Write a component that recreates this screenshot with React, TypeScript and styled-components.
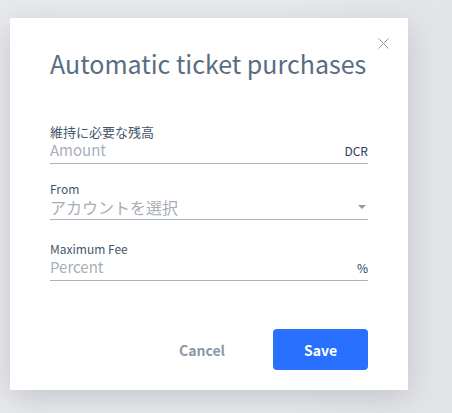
import styled, { createGlobalStyle } from "styled-components";

const GlobalStyle = createGlobalStyle`
  html, body {
    margin: 0;
    padding: 0;
  }
  body {
    width: 452px;
    height: 413px;
    overflow: hidden;
    font-family: "Noto Sans CJK JP", "Noto Sans", sans-serif;
    background: linear-gradient(90deg, #e9eaec 0%, #eaebed 60%, #e3e4e7 100%);
  }
`;

const Backdrop = styled.div`
  width: 452px;
  height: 413px;
  padding: 18px 0 0 10px;
  box-sizing: border-box;
`;

const Modal = styled.div`
  position: relative;
  width: 398px;
  background: #fff;
  padding: 30px 40px 20px;
  box-sizing: border-box;
  box-shadow: 0 8px 30px rgba(120, 128, 145, 0.35);
`;

const Close = styled.button`
  position: absolute;
  top: 20px;
  right: 19px;
  width: 11px;
  height: 11px;
  padding: 0;
  border: 0;
  background: none;
  cursor: pointer;
  display: flex;
`;

const Title = styled.h1`
  margin: 0;
  font-size: 25px;
  line-height: 30px;
  font-weight: 400;
  color: #596d82;
  white-space: nowrap;
`;

const Field = styled.div<{ $gap: number }>`
  margin-top: ${(p) => p.$gap}px;
`;

const Label = styled.div<{ $size: number }>`
  font-size: ${(p) => p.$size}px;
  line-height: 16px;
  color: #45576c;
`;

const InputRow = styled.div`
  display: flex;
  align-items: baseline;
  border-bottom: 1px solid #aab3bd;
  padding-bottom: 2px;
`;

const Placeholder = styled.span<{ $size: number }>`
  flex: 1;
  font-size: ${(p) => p.$size}px;
  line-height: 20px;
  color: #a6afb9;
`;

const Unit = styled.span`
  font-size: 12px;
  line-height: 20px;
  color: #2c3c58;
`;

const Caret = styled.span`
  align-self: center;
  width: 0;
  height: 0;
  margin-right: 2px;
  border-left: 4.5px solid transparent;
  border-right: 4.5px solid transparent;
  border-top: 4.5px solid #8e9aa8;
`;

const Actions = styled.div`
  display: flex;
  justify-content: flex-end;
  align-items: center;
  margin-top: 48px;
`;

const CancelButton = styled.button`
  border: 0;
  background: none;
  padding: 0 24px;
  margin-right: 24px;
  font-family: inherit;
  font-size: 14px;
  font-weight: 700;
  color: #8a98a8;
  cursor: pointer;
`;

const SaveButton = styled.button`
  width: 95px;
  height: 41px;
  border: 0;
  border-radius: 4px;
  background: #2970ff;
  color: #fff;
  font-family: inherit;
  font-size: 14px;
  font-weight: 700;
  cursor: pointer;
`;

export default function App() {
  return (
    <Backdrop>
      <GlobalStyle />
      <Modal>
        <Close aria-label="close">
          <svg width="11" height="11" viewBox="0 0 11 11">
            <path d="M0.5 0.5L10.5 10.5M10.5 0.5L0.5 10.5" stroke="#8e9aa8" strokeWidth="1" fill="none" />
          </svg>
        </Close>
        <Title>Automatic ticket purchases</Title>
        <Field $gap={46}>
          <Label $size={13}>維持に必要な残高</Label>
          <InputRow>
            <Placeholder $size={15}>Amount</Placeholder>
            <Unit>DCR</Unit>
          </InputRow>
        </Field>
        <Field $gap={17}>
          <Label $size={12}>From</Label>
          <InputRow>
            <Placeholder $size={16}>アカウントを選択</Placeholder>
            <Caret />
          </InputRow>
        </Field>
        <Field $gap={21}>
          <Label $size={12}>Maximum Fee</Label>
          <InputRow>
            <Placeholder $size={15}>Percent</Placeholder>
            <Unit>%</Unit>
          </InputRow>
        </Field>
        <Actions>
          <CancelButton>Cancel</CancelButton>
          <SaveButton>Save</SaveButton>
        </Actions>
      </Modal>
    </Backdrop>
  );
}
